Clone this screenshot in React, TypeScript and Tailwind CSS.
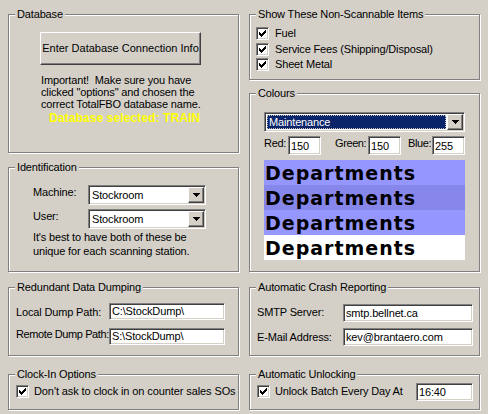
import type { ReactNode } from "react"

// Win2000-style options dialog

const SUNKEN =
  "border border-t-[#808080] border-l-[#808080] border-b-white border-r-white shadow-[inset_1px_1px_0_#404040,inset_-1px_-1px_0_#d4d0c8]"
const RAISED =
  "border border-t-white border-l-white border-b-[#404040] border-r-[#404040] shadow-[inset_-1px_-1px_0_#808080]"

function GroupBox({ title, className, children }: { title: string; className?: string; children?: ReactNode }) {
  return (
    <div className={`relative box-border border border-[#808080] shadow-[inset_1px_1px_0_#fff,1px_1px_0_#fff] ${className ?? ""}`}>
      <span className="absolute left-[6px] top-[-7px] px-[2px] bg-[#d4d0c8] whitespace-nowrap leading-[13px]">{title}</span>
      {children}
    </div>
  )
}

const CHECK_COLS = [2, 3, 4, 3, 2, 1, 0]

function CheckBox() {
  return (
    <div className={`w-[13px] h-[13px] shrink-0 bg-white ${SUNKEN}`}>
      <svg width="11" height="11" viewBox="0 0 11 11" className="block" shapeRendering="crispEdges">
        {CHECK_COLS.map((start, i) => (
          <rect key={i} x={2 + i} y={2 + start} width="1" height="3" fill="#000" />
        ))}
      </svg>
    </div>
  )
}

function Arrow() {
  return (
    <div className={`w-[16px] h-[16px] shrink-0 bg-[#d4d0c8] flex items-center justify-center ${RAISED}`}>
      <svg width="7" height="4" viewBox="0 0 7 4" shapeRendering="crispEdges">
        <path d="M0 0h7v1H0zM1 1h5v1H1zM2 2h3v1H2zM3 3h1v1H3z" fill="#000" />
      </svg>
    </div>
  )
}

function Combo({ value, width, selected }: { value: string; width: string; selected?: boolean }) {
  return (
    <div className={`${width} h-[20px] box-border bg-white p-[1px] flex ${SUNKEN}`}>
      {selected ? (
        <div className="flex-1 flex items-center p-[1px]">
          <div className="flex-1 h-full flex items-center pl-[2px] bg-[#0a246a] text-white outline outline-1 outline-dotted outline-[#c0c0c0] -outline-offset-1">
            {value}
          </div>
        </div>
      ) : (
        <div className="flex-1 flex items-center pl-[2px]">{value}</div>
      )}
      <Arrow />
    </div>
  )
}

function TextField({ value, className }: { value: string; className: string }) {
  return (
    <div className={`box-border bg-white flex pl-[2px] whitespace-nowrap overflow-hidden ${SUNKEN} ${className}`}>
      {value}
    </div>
  )
}

const SWATCHES = ["bg-[#9696ff]", "bg-[#8787eb]", "bg-[#9696ff]", "bg-white"]

export default function App() {
  return (
    <div className="w-[488px] h-[414px] bg-[#d4d0c8] flex gap-[10px] pl-[8px] pt-[14px] font-['Liberation_Sans',Arial,sans-serif] text-[11px] leading-[13px] tracking-[-0.15px] text-black overflow-hidden">
      {/* Left column */}
      <div className="w-[231px] flex flex-col">
        <GroupBox title="Database" className="h-[139px]">
          <div className="flex flex-col items-start pl-[31px] pt-[17px]">
            <button className={`w-[161px] h-[33px] bg-[#d4d0c8] tracking-[0px] ${RAISED}`}>Enter Database Connection Info</button>
            <div className="mt-[9px] ml-[1px] leading-[12px] whitespace-pre">
              {"Important!  Make sure you have\nclicked \"options\" and chosen the\ncorrect TotalFBO database name."}
            </div>
            <div className="mt-[2px] ml-[9px] text-[12px] leading-[13px] font-bold tracking-[0.1px] text-[#ffff00] whitespace-nowrap">
              Database selected: TRAIN
            </div>
          </div>
        </GroupBox>

        <GroupBox title="Identification" className="h-[105px] mt-[14px]">
          <div className="flex flex-col pl-[24px] pt-[17px]">
            <div className="flex items-start">
              <span className="w-[55px] pt-[1px]">Machine:</span>
              <Combo value="Stockroom" width="w-[118px]" />
            </div>
            <div className="flex items-start mt-[4px]">
              <span className="w-[55px] pt-[1px]">User:</span>
              <Combo value="Stockroom" width="w-[118px]" />
            </div>
            <div className="mt-[1px] leading-[14px]">
              It's best to have both of these be
              <br />
              unique for each scanning station.
            </div>
          </div>
        </GroupBox>

        <GroupBox title="Redundant Data Dumping" className="h-[69px] mt-[15px]">
          <div className="flex flex-col pl-[7px] pt-[15px]">
            <div className="flex items-start">
              <span className="w-[93px] pt-[3px] whitespace-nowrap">Local Dump Path:</span>
              <TextField value="C:\StockDump\" className="w-[116px] h-[17px] items-center" />
            </div>
            <div className="flex items-start mt-[8px]">
              <span className="w-[93px] whitespace-nowrap tracking-[-0.4px]">Remote Dump Path:</span>
              <TextField value="S:\StockDump\" className="w-[116px] h-[17px] items-center" />
            </div>
          </div>
        </GroupBox>

        <GroupBox title="Clock-In Options" className="h-[36px] mt-[18px]">
          <div className="flex items-start gap-[5px] pl-[7px] pt-[10px]">
            <CheckBox />
            <span className="whitespace-nowrap tracking-[-0.1px]">Don't ask to clock in on counter sales SOs</span>
          </div>
        </GroupBox>
      </div>

      {/* Right column */}
      <div className="w-[231px] flex flex-col">
        <GroupBox title="Show These Non-Scannable Items" className="h-[66px]">
          <div className="flex flex-col pl-[6px] pt-[12px]">
            <div className="flex items-start gap-[6px] h-[16px]">
              <CheckBox />
              <span>Fuel</span>
            </div>
            <div className="flex items-start gap-[6px] h-[15px]">
              <CheckBox />
              <span>Service Fees (Shipping/Disposal)</span>
            </div>
            <div className="flex items-start gap-[6px] h-[15px]">
              <CheckBox />
              <span>Sheet Metal</span>
            </div>
          </div>
        </GroupBox>

        <GroupBox title="Colours" className="h-[179px] mt-[13px]">
          <div className="flex flex-col pl-[14px] pt-[18px]">
            <Combo value="Maintenance" width="w-[201px]" selected />
            <div className="flex items-start mt-[4px]">
              <span className="w-[24px] pt-[1px] whitespace-nowrap tracking-[-0.3px]">Red:</span>
              <TextField value="150" className="w-[33px] h-[19px] items-end pb-[1px]" />
              <span className="w-[33px] ml-[14px] pt-[1px] whitespace-nowrap tracking-[-0.4px]">Green:</span>
              <TextField value="150" className="w-[33px] h-[19px] items-end pb-[1px]" />
              <span className="w-[24px] ml-[7px] pt-[1px] whitespace-nowrap tracking-[-0.4px]">Blue:</span>
              <TextField value="255" className="w-[33px] h-[19px] items-end pb-[1px]" />
            </div>
            <div className="mt-[5px] w-[201px] flex flex-col font-['DejaVu_Sans',sans-serif] font-bold text-[19px] leading-[25px] tracking-[1px]">
              {SWATCHES.map((bg, i) => (
                <div key={i} className={`${bg} h-[25px] pl-[1px] pt-[1px]`}>
                  Departments
                </div>
              ))}
            </div>
          </div>
        </GroupBox>

        <GroupBox title="Automatic Crash Reporting" className="h-[69px] mt-[15px]">
          <div className="flex flex-col pl-[7px] pt-[16px]">
            <div className="flex items-start">
              <span className="w-[86px] pt-[2px]">SMTP Server:</span>
              <TextField value="smtp.bellnet.ca" className="w-[130px] h-[18px] items-center" />
            </div>
            <div className="flex items-start mt-[6px]">
              <span className="w-[86px] pt-[3px]">E-Mail Address:</span>
              <TextField value="kev@brantaero.com" className="w-[130px] h-[18px] items-center" />
            </div>
          </div>
        </GroupBox>

        <GroupBox title="Automatic Unlocking" className="h-[36px] mt-[18px]">
          <div className="flex items-start pl-[7px] pt-[8px]">
            <div className="mt-[2px]">
              <CheckBox />
            </div>
            <span className="w-[141px] ml-[5px] mt-[2px] whitespace-nowrap">Unlock Batch Every Day At</span>
            <TextField value="16:40" className="w-[57px] h-[18px] items-end pb-[1px]" />
          </div>
        </GroupBox>
      </div>
    </div>
  )
}
